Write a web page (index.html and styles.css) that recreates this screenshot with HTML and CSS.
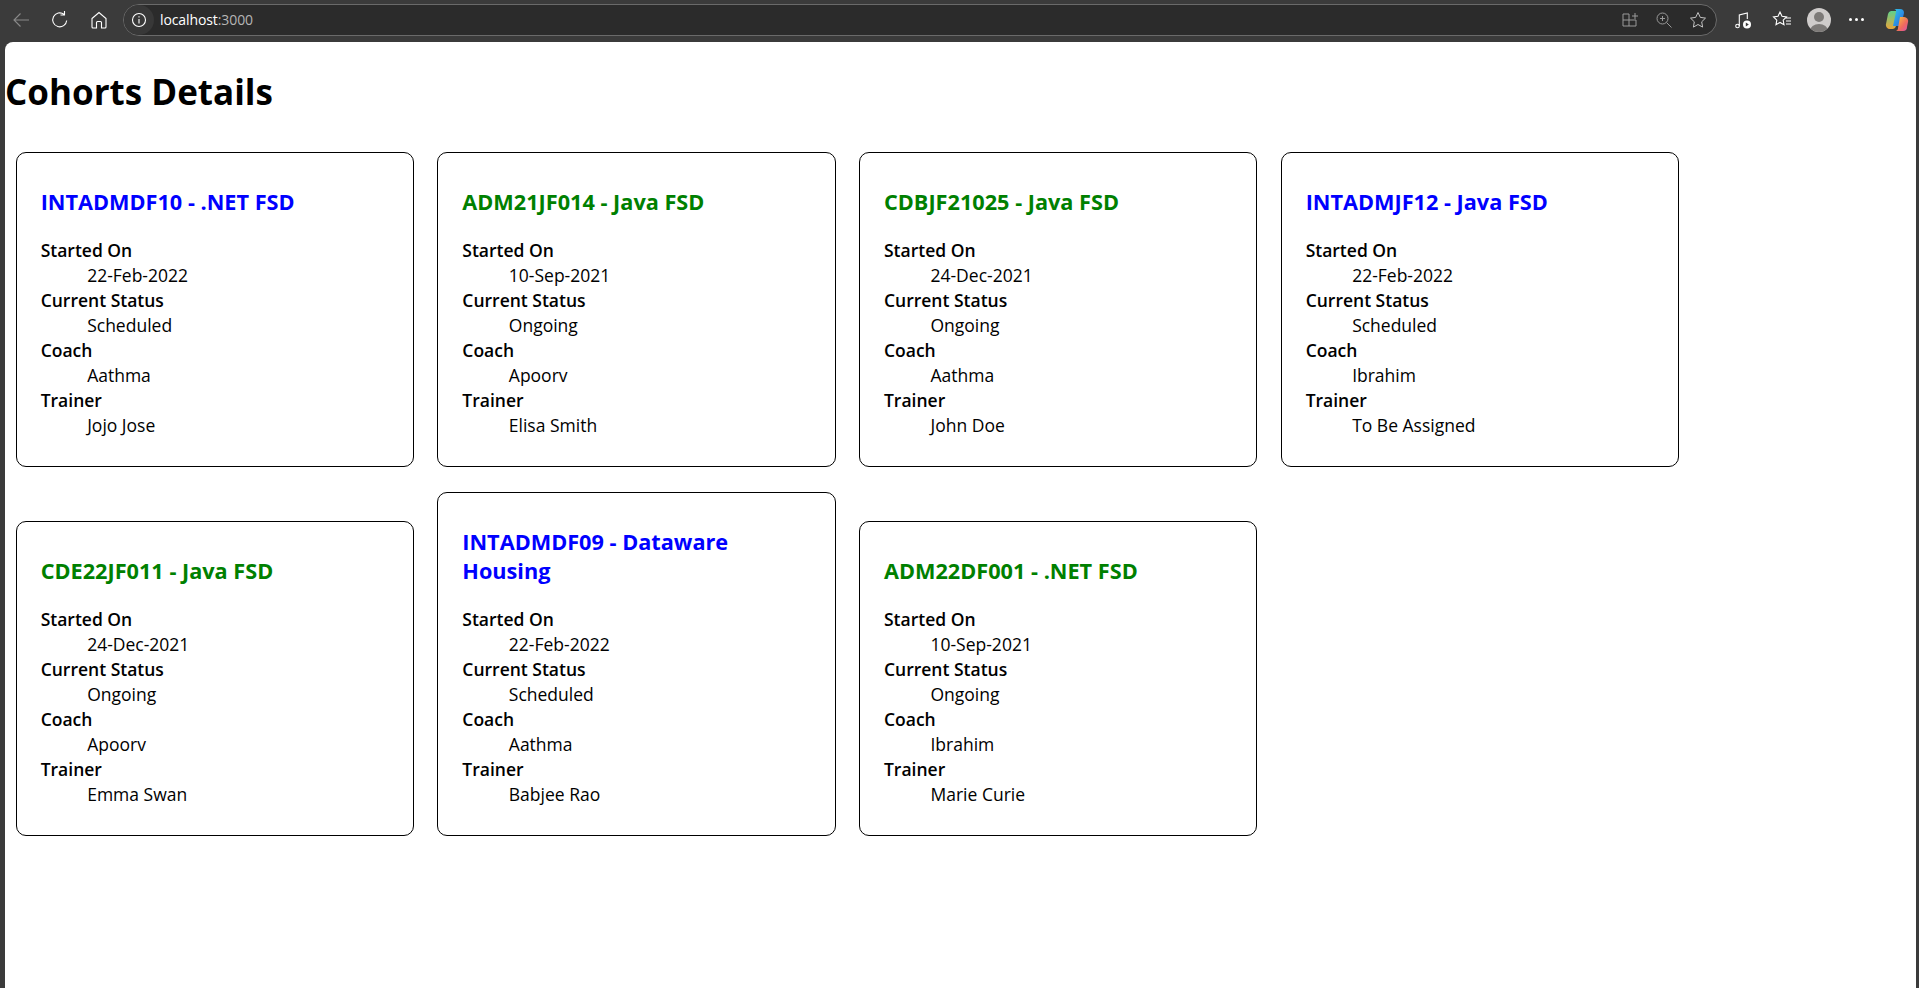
FILE: index.html
```html
<!DOCTYPE html>
<html lang="en">
<head>
    <meta charset="UTF-8">
    <meta name="viewport" content="width=device-width, initial-scale=1.0">
    <title>Cohorts Details</title>
    <link rel="stylesheet" href="styles.css">
</head>
<body>
    <header class="toolbar">
        <div class="nav-buttons">
            <svg class="icon back" viewBox="0 0 20 20"><path d="M18 10H3M9.500 3.500 3 10l6.500 6.500"/></svg>
            <svg class="icon reload" viewBox="0 0 20 20"><path d="M16.700 10.500A7 7 0 1 1 14 4.300M14.500 1v4h-4"/></svg>
            <svg class="icon home" viewBox="0 0 20 20"><path d="M3 8.500 10 2.500l7 6V17a1 1 0 0 1-1 1h-3.500v-5.500a1 1 0 0 0-1-1h-3a1 1 0 0 0-1 1V18H4a1 1 0 0 1-1-1z"/></svg>
        </div>
        <div class="address-bar">
            <span class="info-badge">
                <svg class="icon info" viewBox="0 0 16 16"><circle cx="8" cy="8" r="6.500"/><path d="M8 7v4.500M8 4.300v1.200"/></svg>
            </span>
            <span class="url">localhost<span class="url-port">:3000</span></span>
            <div class="address-icons">
                <svg class="icon dim" viewBox="0 0 18 18"><path d="M2 3h6v6H2zM2 9v6h6V9h7v6H8M11 5h6M14 2v6"/></svg>
                <svg class="icon dim" viewBox="0 0 18 18"><circle cx="7.500" cy="7.500" r="5.500"/><path d="m11.500 11.500 5 5M7.500 5v5M5 7.500h5"/></svg>
                <svg class="icon dim star" viewBox="0 0 18 18"><path d="m9 1.500 2.300 4.900 5.200.7-3.800 3.700.9 5.300L9 13.500l-4.600 2.600.9-5.300L1.500 7.100l5.200-.7z"/></svg>
            </div>
        </div>
        <div class="tools">
            <svg class="icon music" viewBox="0 0 20 20"><circle cx="4.500" cy="16" r="1.800"/><path d="M6.300 16V5l8-2v6"/><circle cx="14" cy="14.500" r="4" class="solid"/><path d="m12.800 12.500 3 2-3 2z" class="cut"/></svg>
            <svg class="icon favs" viewBox="0 0 20 20"><path d="m8 2 2 4.300 4.500.6-3.300 3.200.8 4.600-4-2.300-4 2.300.8-4.600L1.500 6.900 6 6.300zM14 8h5M14 11h5M14 14h5"/></svg>
            <span class="avatar"><span class="avatar-head"></span><span class="avatar-body"></span></span>
            <span class="more"><i></i><i></i><i></i></span>
            <svg class="copilot" viewBox="0 0 24 24">
                <defs>
                    <linearGradient id="copilotA" x1="0" y1="0" x2="1" y2="1"><stop offset="0" stop-color="#2fc7e8"/><stop offset="1" stop-color="#2a62e0"/></linearGradient>
                    <linearGradient id="copilotB" x1="0" y1="0" x2="1" y2="1"><stop offset="0" stop-color="#f7c93e"/><stop offset=".6" stop-color="#ef6a5e"/><stop offset="1" stop-color="#d94fb0"/></linearGradient>
                    <linearGradient id="copilotC" x1="0" y1="0" x2="0" y2="1"><stop offset="0" stop-color="#5fd08a"/><stop offset="1" stop-color="#e8a53a"/></linearGradient>
                </defs>
                <path fill="url(#copilotC)" d="M6 3h7l-2 15a4 4 0 0 1-4 3H5a4 4 0 0 1-4-5l2-10a4 4 0 0 1 3-3z"/>
                <path fill="url(#copilotA)" d="M9 1h6a4 4 0 0 1 4 4l-3 13h-8l3-14a2.500 2.500 0 0 0-2-3z"/>
                <path fill="url(#copilotB)" d="M15 9h4a4 4 0 0 1 4 5l-1 5a4 4 0 0 1-4 4h-7a3 3 0 0 0 2-3z"/>
            </svg>
        </div>
    </header>

    <main class="page">
        <h1>Cohorts Details</h1>
        <div class="cohorts">
            <div class="card">
                <h3 class="scheduled">INTADMDF10 - .NET FSD</h3>
                <dl>
                    <dt>Started On</dt><dd>22-Feb-2022</dd>
                    <dt>Current Status</dt><dd>Scheduled</dd>
                    <dt>Coach</dt><dd>Aathma</dd>
                    <dt>Trainer</dt><dd>Jojo Jose</dd>
                </dl>
            </div>
            <div class="card">
                <h3 class="ongoing">ADM21JF014 - Java FSD</h3>
                <dl>
                    <dt>Started On</dt><dd>10-Sep-2021</dd>
                    <dt>Current Status</dt><dd>Ongoing</dd>
                    <dt>Coach</dt><dd>Apoorv</dd>
                    <dt>Trainer</dt><dd>Elisa Smith</dd>
                </dl>
            </div>
            <div class="card">
                <h3 class="ongoing">CDBJF21025 - Java FSD</h3>
                <dl>
                    <dt>Started On</dt><dd>24-Dec-2021</dd>
                    <dt>Current Status</dt><dd>Ongoing</dd>
                    <dt>Coach</dt><dd>Aathma</dd>
                    <dt>Trainer</dt><dd>John Doe</dd>
                </dl>
            </div>
            <div class="card">
                <h3 class="scheduled">INTADMJF12 - Java FSD</h3>
                <dl>
                    <dt>Started On</dt><dd>22-Feb-2022</dd>
                    <dt>Current Status</dt><dd>Scheduled</dd>
                    <dt>Coach</dt><dd>Ibrahim</dd>
                    <dt>Trainer</dt><dd>To Be Assigned</dd>
                </dl>
            </div>
            <div class="card">
                <h3 class="ongoing">CDE22JF011 - Java FSD</h3>
                <dl>
                    <dt>Started On</dt><dd>24-Dec-2021</dd>
                    <dt>Current Status</dt><dd>Ongoing</dd>
                    <dt>Coach</dt><dd>Apoorv</dd>
                    <dt>Trainer</dt><dd>Emma Swan</dd>
                </dl>
            </div>
            <div class="card">
                <h3 class="scheduled">INTADMDF09 - Dataware Housing</h3>
                <dl>
                    <dt>Started On</dt><dd>22-Feb-2022</dd>
                    <dt>Current Status</dt><dd>Scheduled</dd>
                    <dt>Coach</dt><dd>Aathma</dd>
                    <dt>Trainer</dt><dd>Babjee Rao</dd>
                </dl>
            </div>
            <div class="card">
                <h3 class="ongoing">ADM22DF001 - .NET FSD</h3>
                <dl>
                    <dt>Started On</dt><dd>10-Sep-2021</dd>
                    <dt>Current Status</dt><dd>Ongoing</dd>
                    <dt>Coach</dt><dd>Ibrahim</dd>
                    <dt>Trainer</dt><dd>Marie Curie</dd>
                </dl>
            </div>
        </div>
    </main>
</body>
</html>
```

FILE: styles.css
```css
html, body {
    height: 100%;
}

body {
    background-color: #3b3b3b;
    margin: 0;
    display: flex;
    flex-direction: column;
    font-family: 'Open Sans', 'Noto Sans', sans-serif;
    overflow: hidden;
}

/* browser chrome */
.toolbar {
    height: 42px;
    flex-shrink: 0;
    display: flex;
    align-items: center;
    color: #fff;
}

.icon {
    width: 20px;
    height: 20px;
    fill: none;
    stroke: currentColor;
    stroke-width: 1.1;
    flex-shrink: 0;
}

.nav-buttons {
    width: 123px;
    display: flex;
    align-items: center;
    gap: 19px;
    padding-left: 11px;
    margin-top: -3px;
    box-sizing: border-box;
    flex-shrink: 0;
}

.back {
    color: #8a8a8a;
}

.address-bar {
    width: 1594px;
    height: 32px;
    margin-top: -3px;
    box-sizing: border-box;
    border: 1px solid #6a6a6a;
    border-radius: 16px;
    background-color: #2b2b2b;
    display: flex;
    align-items: center;
    flex-shrink: 0;
}

.info-badge {
    width: 30px;
    height: 30px;
    border-radius: 50%;
    background-color: #383838;
    display: flex;
    align-items: center;
    justify-content: center;
    margin-right: 6px;
}

.info {
    width: 16px;
    height: 16px;
}

.url {
    font-size: 14px;
    color: #fff;
    letter-spacing: -0.1px;
}

.url-port {
    color: #b5b5b5;
}

.address-icons {
    margin-left: auto;
    display: flex;
    gap: 16px;
    align-items: center;
    padding-right: 9px;
}

.dim {
    color: #9a9a9a;
    width: 18px;
    height: 18px;
    stroke-width: 1;
}

.star {
    color: #c4c4c4;
}

.tools {
    flex-grow: 1;
    display: flex;
    align-items: center;
    padding-left: 16px;
    margin-top: -3px;
}

.favs {
    margin-left: 19px;
}

.solid {
    fill: #fff;
    stroke: none;
}

.cut {
    fill: #3b3b3b;
    stroke: none;
}

.avatar {
    width: 24px;
    height: 24px;
    margin-left: 15px;
    border-radius: 50%;
    background-color: #cfcccb;
    position: relative;
    overflow: hidden;
    flex-shrink: 0;
}

.avatar-head {
    position: absolute;
    left: 7px;
    top: 4px;
    width: 10px;
    height: 10px;
    border-radius: 50%;
    background-color: #7d7a78;
}

.avatar-body {
    position: absolute;
    left: 3px;
    top: 16px;
    width: 18px;
    height: 14px;
    border-radius: 50%;
    background-color: #7d7a78;
}

.more {
    display: flex;
    gap: 3px;
    margin-left: 18px;
}

.more i {
    width: 3px;
    height: 3px;
    border-radius: 50%;
    background-color: #fff;
}

.copilot {
    width: 24px;
    height: 24px;
    margin-left: 21px;
    flex-shrink: 0;
}

/* page */
.page {
    flex-grow: 1;
    background-color: #fff;
    margin: 0 3px 0 5px;
    border-radius: 8px 8px 0 0;
    overflow: hidden;
    color: #000;
}

h1 {
    font-size: 35px;
    font-weight: 700;
    margin: 28px 0 38px;
    line-height: 44px;
}

.cohorts {
    display: flex;
    flex-wrap: wrap;
    align-items: flex-end;
    gap: 25px 23.33px;
    padding-left: 10.67px;
}

.card {
    width: 398.33px;
    box-sizing: border-box;
    border: 1px solid #000;
    border-radius: 10px;
    padding: 24px 24px 28px;
}

h3 {
    font-size: 21.7px;
    font-weight: 700;
    line-height: 29px;
    margin: 10px 0 22px;
}

.scheduled {
    color: #00f;
}

.ongoing {
    color: #008000;
}

dl {
    margin: 0;
    font-size: 17.5px;
    line-height: 25px;
}

dt {
    font-weight: 600;
}

dd {
    margin-left: 46.5px;
}
```
